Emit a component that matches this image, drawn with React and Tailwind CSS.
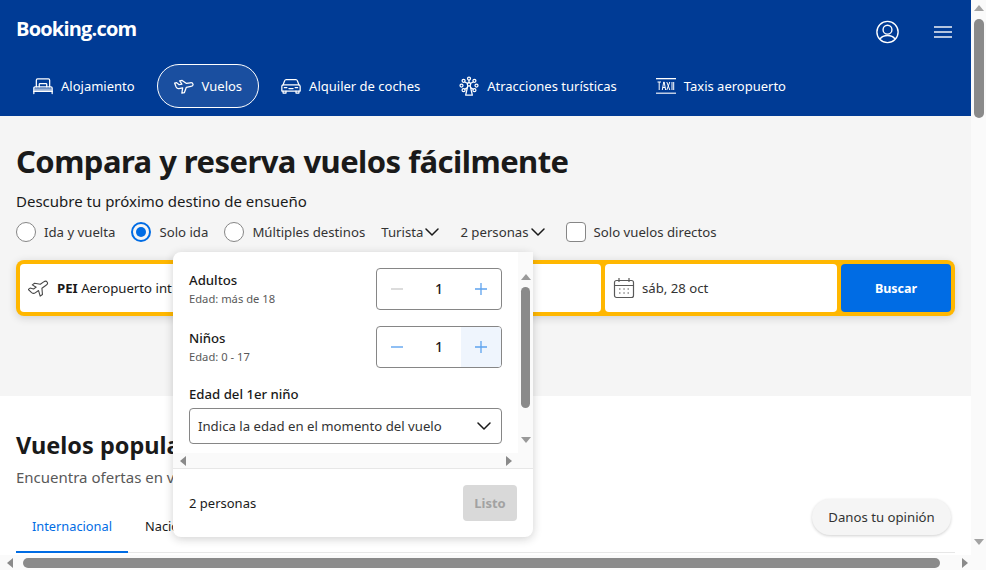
import React from "react";

const Stroke = ({ children, size = 20, className = "", sw = 1.5 }) => (
  <svg width={size} height={size} viewBox="0 0 24 24" fill="none" stroke="currentColor" strokeWidth={sw} strokeLinecap="round" strokeLinejoin="round" className={`shrink-0 ${className}`}>
    {children}
  </svg>
);

const Bed = () => (
  <Stroke>
    <path d="M4 13V5A1.500 1.500 0 0 1 5.500 3.500h13A1.500 1.500 0 0 1 20 5v8" />
    <path d="M7.500 13v-3A1 1 0 0 1 8.500 9h7a1 1 0 0 1 1 1v3" />
    <path d="M1 21v-6.500A1.500 1.500 0 0 1 2.500 13h19a1.500 1.500 0 0 1 1.500 1.500V21" />
    <path d="M1.500 16.500h21" strokeOpacity="0.6" strokeWidth="3.500" strokeLinecap="butt" />
    <path d="M1 18.500h22" />
  </Stroke>
);

const PlaneIcon = ({ size = 20, angle = -10, sw = 1.5, className = "" }) => (
  <Stroke size={size} sw={sw} className={className}>
    <path
      transform={`rotate(${angle} 12 12)`}
      d="M1.500 6.500H4l2.500 3H10L8 5h3l4.500 4.500H20c2 0 3 1.300 3 2.500 0 1.400-1.500 2-3 2h-5.500L11 20H8l2-6H5.500C4 14 3 13 2.500 11.500z"
    />
  </Stroke>
);

const Car = () => (
  <Stroke>
    <path d="M2.500 10.500l2-5A2 2 0 0 1 6.300 4.200h11.400a2 2 0 0 1 1.800 1.300l2 5" />
    <path d="M3 10.500h18a2 2 0 0 1 2 2V18H1v-5.500a2 2 0 0 1 2-2z" />
    <path d="M2.500 18v2.500h3.500V18M18 18v2.500h3.500V18" />
    <path d="M4 14h3M17 14h3M9.500 15h5" />
  </Stroke>
);

const Wheel = () => (
  <Stroke>
    <circle cx="12" cy="3" r="1.800" />
    <circle cx="5.500" cy="5.800" r="1.800" />
    <circle cx="18.500" cy="5.800" r="1.800" />
    <circle cx="3" cy="11.500" r="1.800" />
    <circle cx="21" cy="11.500" r="1.800" />
    <circle cx="5.500" cy="17" r="1.800" />
    <circle cx="18.500" cy="17" r="1.800" />
    <circle cx="12" cy="10" r="2" />
    <path d="M12 4.800V8M7 7.200l3.400 1.800M17 7.200L13.600 9" />
    <path d="M10.500 12L8 23h8l-2.500-11M7 15.800l3-2M17 15.800l-3-2" />
  </Stroke>
);

const Taxi = () => (
  <svg width="20" height="20" viewBox="0 0 20 20" className="shrink-0">
    <rect x="0" y="2" width="20" height="1.300" fill="currentColor" />
    <rect x="0" y="16.500" width="20" height="1.500" fill="currentColor" opacity="0.75" />
    <path d="M1.500 6h3.500M3.200 6v8M6.300 14l1.400-8h.5l1.400 8M6.800 11.500h2.300M10.800 6l3 8M13.800 6l-3 8M16 6v8M17.700 6v8" stroke="currentColor" strokeWidth="1" fill="none" />
  </svg>
);

const Chevron = ({ className = "" }) => (
  <svg width="14" height="14" viewBox="0 0 14 14" fill="none" stroke="#1a1a1a" strokeWidth="1.500" strokeLinecap="round" strokeLinejoin="round" className={`shrink-0 ${className}`}>
    <path d="M1 4l6 6 6-6" />
  </svg>
);

const Tri = ({ dir, className = "" }) => {
  const p = { up: "M5 2l5 6H0z", down: "M0 2h10L5 8z", left: "M7 0v10L1 5z", right: "M3 0v10l6-5z" }[dir];
  return (
    <svg width="10" height="10" viewBox="0 0 10 10" className={`shrink-0 ${className}`} fill="currentColor">
      <path d={p} />
    </svg>
  );
};

const NavItem = ({ icon, label, active }) => (
  <div className={`flex h-11 items-center gap-2 rounded-full border px-4 text-[13px] ${active ? "border-white bg-white/10" : "border-transparent"}`}>
    {icon}
    <span className="pt-[1px]">{label}</span>
  </div>
);

const Radio = ({ label, checked }) => (
  <div className="flex items-center gap-2">
    {checked ? (
      <span className="flex h-5 w-5 items-center justify-center rounded-full border-2 border-[#006ce4]">
        <span className="h-[10px] w-[10px] rounded-full bg-[#006ce4]" />
      </span>
    ) : (
      <span className="h-5 w-5 rounded-full border border-[#868686] bg-white" />
    )}
    <span className="pt-[1px]">{label}</span>
  </div>
);

const Stepper = ({ minusOff, hoverPlus }) => (
  <div className="flex h-[42px] w-[126px] items-stretch overflow-hidden rounded border border-[#868686]">
    <div className={`flex w-10 items-center justify-center ${minusOff ? "text-[#d0d0d0]" : "text-[#6aaaf0]"}`}>
      <svg width="14" height="14" viewBox="0 0 14 14" stroke="currentColor" strokeWidth="1.300"><path d="M1 7h12" /></svg>
    </div>
    <div className="flex flex-1 items-center justify-center text-sm font-medium text-[#1a1a1a]">1</div>
    <div className={`flex w-10 items-center justify-center text-[#5da2ee] ${hoverPlus ? "bg-[#eff5fd]" : ""}`}>
      <svg width="14" height="14" viewBox="0 0 14 14" stroke="currentColor" strokeWidth="1.300"><path d="M1 7h12M7 1v12" /></svg>
    </div>
  </div>
);

const Row = ({ title, sub, children }) => (
  <div className="flex items-center justify-between">
    <div>
      <div className="text-[13.2px] font-medium leading-[18px] text-[#1a1a1a]">{title}</div>
      <div className="mt-[2px] text-[11.2px] leading-4 text-[#595959]">{sub}</div>
    </div>
    {children}
  </div>
);

export default function App() {
  return (
    <div className="relative flex h-[570px] w-[986px] flex-col overflow-hidden bg-white text-[#1a1a1a] [font-family:'Noto_Sans',sans-serif]">
      <div className="flex min-h-0 flex-1">
        <div className="flex w-[971px] flex-col">
          <header className="h-[116px] bg-[#003b95] pl-4 text-white">
            <div className="flex h-16 items-start justify-between">
              <div className="mt-[14px] text-[20px] font-bold leading-[30px] tracking-[-0.8px] [font-family:'Open_Sans',sans-serif]">Booking.com</div>
              <div className="mt-[20px] flex items-start gap-[34px] pr-[19px]">
                <svg width="25" height="24" viewBox="0 0 26 26" fill="none" stroke="currentColor" strokeWidth="1.500">
                  <circle cx="13" cy="13" r="11.500" />
                  <circle cx="13" cy="10.500" r="4.800" />
                  <path d="M5 20.500c2-3 5-3.700 8-3.700s6 .7 8 3.700" />
                </svg>
                <svg width="18" height="12" viewBox="0 0 18 12" stroke="currentColor" strokeOpacity="0.7" strokeWidth="2" className="mt-[6px]">
                  <path d="M0 1h18M0 6h18M0 11h18" />
                </svg>
              </div>
            </div>
            <nav className="flex gap-[5px]">
              <NavItem icon={<Bed />} label="Alojamiento" />
              <NavItem active icon={<PlaneIcon />} label="Vuelos" />
              <NavItem icon={<Car />} label="Alquiler de coches" />
              <NavItem icon={<Wheel />} label="Atracciones turísticas" />
              <NavItem icon={<Taxi />} label="Taxis aeropuerto" />
            </nav>
          </header>

          <section className="h-[280px] bg-[#f5f5f5] px-4">
            <h1 className="pt-[25px] text-[31px] font-bold leading-10 tracking-[-0.55px] text-[#1a1a1a]">Compara y reserva vuelos fácilmente</h1>
            <p className="mt-[8px] text-[15px] leading-6">Descubre tu próximo destino de ensueño</p>
            <div className="mt-[7px] flex h-6 items-center text-[13.2px] text-[#333]">
              <Radio label="Ida y vuelta" />
              <div className="ml-4"><Radio checked label="Solo ida" /></div>
              <div className="ml-4"><Radio label="Múltiples destinos" /></div>
              <div className="ml-4 flex items-center gap-[2px]"><span className="pt-[1px]">Turista</span><Chevron /></div>
              <div className="ml-[21px] flex items-center gap-[2px]"><span className="pt-[1px]">2 personas</span><Chevron /></div>
              <div className="ml-[21px] flex items-center gap-2">
                <span className="h-5 w-5 rounded border border-[#868686] bg-white" />
                <span className="pt-[1px]">Solo vuelos directos</span>
              </div>
            </div>
            <div className="mt-[16px] flex h-14 w-[939px] gap-1 rounded-lg bg-[#ffb700] p-1 text-[13.2px] shadow-[0_2px_8px_rgba(26,26,26,0.16)]">
              <div className="flex w-[290px] items-center gap-[7px] whitespace-nowrap rounded bg-white pl-2">
                <PlaneIcon size={22} angle={-35} sw={1.2} className="text-[#474747]" />
                <span className="pt-[1px]"><b className="font-bold">PEI</b> Aeropuerto int</span>
              </div>
              <div className="w-[287px] rounded bg-white" />
              <div className="flex w-[232px] items-center gap-[7px] rounded bg-white pl-2 text-[#333]">
                <svg width="22" height="22" viewBox="0 0 22 22" fill="none" stroke="#595959" strokeWidth="1.200" className="shrink-0">
                  <rect x="1.500" y="3.500" width="19" height="17" rx="2" />
                  <path d="M1.500 8.500h19M6 1v4M16 1v4" />
                  <path d="M6 12h1.500M10.300 12h1.500M14.500 12h1.500M6 16h1.500M10.300 16h1.500M14.500 16h1.500" strokeDasharray="1.500 1" />
                </svg>
                <span className="pt-[1px]">sáb, 28 oct</span>
              </div>
              <div className="flex flex-1 items-center justify-center rounded bg-[#006ce4] pt-[2px] text-[12.5px] font-bold text-white">Buscar</div>
            </div>
          </section>

          <section className="min-h-0 flex-1 overflow-hidden px-4">
            <h2 className="pt-[33px] text-[23.5px] font-bold leading-8">Vuelos populares</h2>
            <p className="mt-[3px] text-[15px] leading-[26px] text-[#595959]">Encuentra ofertas en vuelos</p>
            <div className="mt-[13px] flex h-[50px] border-b border-[#e7e7e7] pb-[1px] text-[12.8px]">
              <div className="-mb-[2px] flex w-[112px] items-center justify-center border-b-2 border-[#006ce4] pb-[1px] text-[#006ce4]">Internacional</div>
              <div className="ml-[17px] flex items-center">Nacional</div>
            </div>
          </section>
        </div>

        <div className="flex w-[15px] flex-col items-center bg-[#fafafa] text-[#a3a3a3]">
          <Tri dir="up" className="mt-[3px]" />
          <div className="mt-[6px] h-[99px] w-[10px] rounded-full bg-[#8a8a8a]" />
          <div className="flex-1" />
          <Tri dir="down" className="mb-[8px]" />
        </div>
      </div>

      <div className="flex h-[15px] items-center bg-[#fafafa] text-[#8a8a8a]">
        <Tri dir="left" className="ml-[6px]" />
        <div className="ml-[7px] h-[10px] w-[917px] rounded-full bg-[#8a8a8a]" />
        <Tri dir="right" className="ml-[19px]" />
      </div>

      {/* people popover */}
      <div className="absolute left-[173px] top-[252px] flex h-[285px] w-[360px] flex-col rounded-lg bg-white shadow-[0_2px_10px_rgba(26,26,26,0.2)]">
        <div className="flex h-[217px] flex-col border-b border-[#e7e7e7]">
          <div className="flex min-h-0 flex-1">
            <div className="w-[345px] px-4 pt-4">
              <Row title="Adultos" sub="Edad: más de 18"><Stepper minusOff /></Row>
              <div className="mt-4"><Row title="Niños" sub="Edad: 0 - 17"><Stepper hoverPlus /></Row></div>
              <div className="mt-[17px] text-[13.2px] font-medium leading-[18px]">Edad del 1er niño</div>
              <div className="mt-[5px] flex h-9 items-center justify-between rounded border border-[#868686] pl-2 pr-[10px] text-[13.2px] text-[#333]">
                <span className="pt-[1px]">Indica la edad en el momento del vuelo</span>
                <Chevron />
              </div>
            </div>
            <div className="flex w-[15px] flex-col items-center bg-[#fafafa] text-[#8a8a8a]">
              <Tri dir="up" className="mt-[20px] text-[#999]" />
              <div className="mt-[5px] h-[121px] w-[9px] rounded-full bg-[#8a8a8a]" />
              <Tri dir="down" className="mt-[27px] text-[#999]" />
            </div>
          </div>
          <div className="flex h-[15px] items-center justify-between bg-[#fafafa] pl-[6px] pr-[20px] text-[#8a8a8a]">
            <Tri dir="left" />
            <Tri dir="right" />
          </div>
        </div>
        <div className="flex flex-1 items-center justify-between pl-4 pr-4 text-[13px]">
          <span className="pt-[1px]">2 personas</span>
          <div className="flex h-9 w-[54px] items-center justify-center rounded bg-[#d9d9d9] pt-[1px] font-bold text-[#a2a2a2]">Listo</div>
        </div>
      </div>

      {/* feedback button */}
      <div className="absolute left-[812px] top-[499px] flex h-9 w-[139px] items-center justify-center rounded-full bg-[#f5f5f5] pt-[1px] text-[13.2px] text-[#333] shadow-[0_1px_3px_rgba(26,26,26,0.2)]">
        Danos tu opinión
      </div>
    </div>
  );
}
